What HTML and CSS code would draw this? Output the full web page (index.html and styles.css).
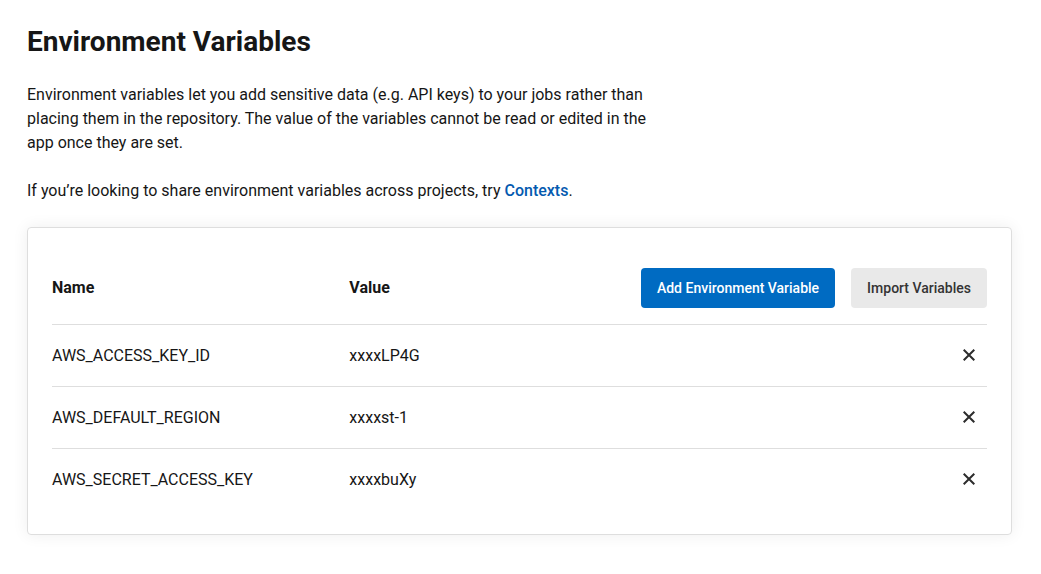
FILE: index.html
```
<!DOCTYPE html>
<html lang="en">
<head>
<meta charset="utf-8">
<meta name="viewport" content="width=device-width, initial-scale=1">
<title>Environment Variables</title>
<link rel="stylesheet" href="styles.css">
</head>
<body>
<main class="page">
  <h1 class="title">Environment Variables</h1>
  <div class="intro">
    <p>Environment variables let you add sensitive data (e.g. API keys) to your jobs rather than placing them in the repository. The value of the variables cannot be read or edited in the app once they are set.</p>
    <p>If you’re looking to share environment variables across projects, try <a class="link" href="#contexts">Contexts</a>.</p>
  </div>
  <section class="card">
    <table class="vars">
      <thead>
        <tr>
          <th class="col-name" scope="col">Name</th>
          <th class="col-value" scope="col">Value</th>
          <td>
            <div class="actions">
              <button class="button primary" type="button">Add Environment Variable</button>
              <button class="button" type="button">Import Variables</button>
            </div>
          </td>
        </tr>
      </thead>
      <tbody>
        <tr>
          <td class="text">AWS_ACCESS_KEY_ID</td>
          <td class="text">xxxxLP4G</td>
          <td><div class="actions"><button class="remove" type="button" aria-label="Remove AWS_ACCESS_KEY_ID"><svg viewBox="0 0 12 12" aria-hidden="true"><path d="M.7.7l10.6 10.6M11.3.7L.7 11.3"/></svg></button></div></td>
        </tr>
        <tr>
          <td class="text">AWS_DEFAULT_REGION</td>
          <td class="text">xxxxst-1</td>
          <td><div class="actions"><button class="remove" type="button" aria-label="Remove AWS_DEFAULT_REGION"><svg viewBox="0 0 12 12" aria-hidden="true"><path d="M.7.7l10.6 10.6M11.3.7L.7 11.3"/></svg></button></div></td>
        </tr>
        <tr>
          <td class="text">AWS_SECRET_ACCESS_KEY</td>
          <td class="text">xxxxbuXy</td>
          <td><div class="actions"><button class="remove" type="button" aria-label="Remove AWS_SECRET_ACCESS_KEY"><svg viewBox="0 0 12 12" aria-hidden="true"><path d="M.7.7l10.6 10.6M11.3.7L.7 11.3"/></svg></button></div></td>
        </tr>
      </tbody>
    </table>
  </section>
</main>
</body>
</html>
```
FILE: styles.css
```
* { box-sizing: border-box; }
body {
  margin: 0;
  background: #fff;
  color: #161616;
  font: 16px/24px Roboto, sans-serif;
}
.page { padding: 24px 29px 39px 27px; }
.title {
  margin: 0 0 24px;
  font-size: 28px;
  line-height: 35px;
  font-weight: 700;
}
.intro { max-width: 632px; }
.intro p { margin: 0 0 24px; }
.link {
  color: #045ab0;
  font-weight: 500;
  text-decoration: none;
}
.card {
  padding: 24px;
  border: 1px solid #dedede;
  border-radius: 4px;
  box-shadow: 0 0 16px rgba(0, 0, 0, 0.07);
}
.vars {
  width: 100%;
  border-collapse: collapse;
  table-layout: fixed;
}
.vars th, .vars td {
  height: 62px;
  padding: 0;
  text-align: left;
  vertical-align: middle;
}
.vars thead th, .vars thead td { height: 72px; }
.vars th { font-weight: 700; }
.vars .text { padding-top: 1px; }
.vars tbody tr { border-top: 1px solid #dedede; }
.col-name { width: 31.8%; }
.col-value { width: 25%; }
.actions {
  display: flex;
  justify-content: flex-end;
  gap: 16px;
}
.button {
  height: 40px;
  padding: 0 16px;
  border: 0;
  border-radius: 4px;
  background: #e9e9e9;
  color: #343434;
  font: 500 14px/20px Roboto, sans-serif;
  white-space: nowrap;
}
.primary { background: #006bc2; color: #fff; }
.remove {
  display: flex;
  align-items: center;
  justify-content: center;
  width: 36px;
  height: 32px;
  padding: 0;
  border: 0;
  background: none;
}
.remove svg {
  width: 12px;
  height: 12px;
  fill: none;
  stroke: #2c2c2c;
  stroke-width: 2;
}
```
